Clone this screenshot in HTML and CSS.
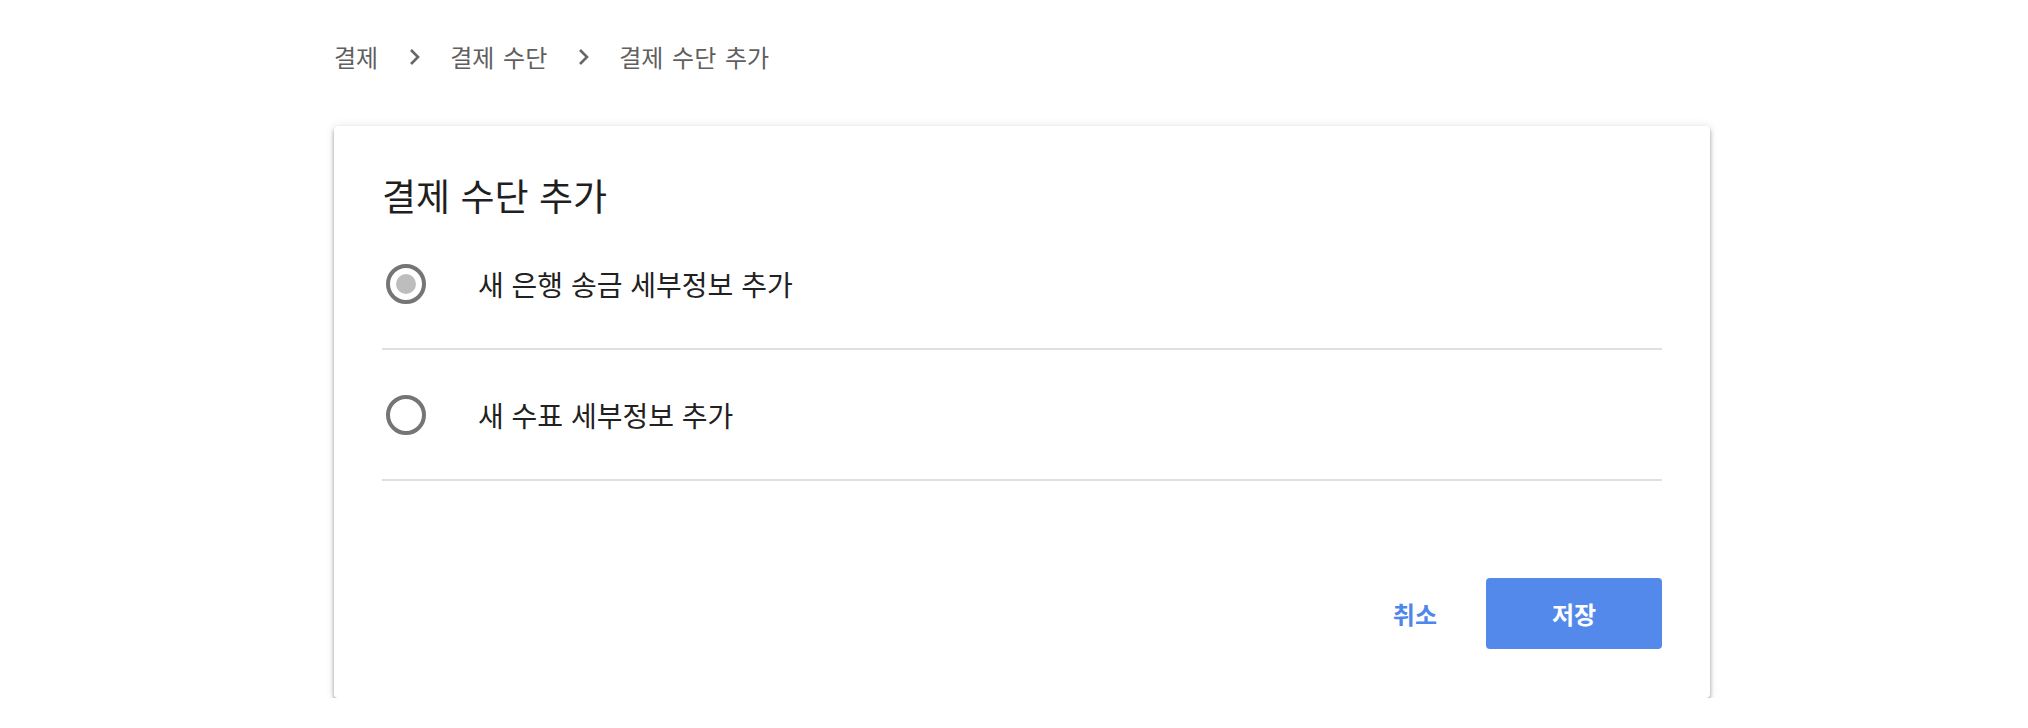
FILE: index.html
```html
<!DOCTYPE html>
<html lang="ko">
<head>
<meta charset="utf-8">
<title>결제 수단 추가</title>
<link rel="stylesheet" href="styles.css">
</head>
<body>
<div class="page">
  <nav class="crumbs">
    <span class="crumb">결제</span>
    <svg class="chev" width="12" height="18" viewBox="0 0 12 18"><polyline points="2,2 9,9 2,16" fill="none" stroke="#666666" stroke-width="2.6"/></svg>
    <span class="crumb">결제 수단</span>
    <svg class="chev" width="12" height="18" viewBox="0 0 12 18"><polyline points="2,2 9,9 2,16" fill="none" stroke="#666666" stroke-width="2.6"/></svg>
    <span class="crumb">결제 수단 추가</span>
  </nav>
  <section class="card">
    <h1 class="title">결제 수단 추가</h1>
    <div class="options">
      <label class="option">
        <span class="radio-box"><span class="radio checked"></span></span>
        <span class="option-text">새 은행 송금 세부정보 추가</span>
      </label>
      <label class="option">
        <span class="radio-box"><span class="radio"></span></span>
        <span class="option-text">새 수표 세부정보 추가</span>
      </label>
    </div>
    <div class="actions">
      <button class="btn btn-text">취소</button>
      <button class="btn btn-primary">저장</button>
    </div>
  </section>
</div>
</body>
</html>
```

FILE: styles.css
```css
* { box-sizing: border-box; }
html, body { margin: 0; padding: 0; background: #ffffff; }
body {
  font-family: "Noto Sans CJK KR", "Noto Sans", sans-serif;
  color: #212121;
}
.page {
  padding: 0 0 0 334px;
}
.crumbs {
  display: flex;
  align-items: center;
  height: 114px;
  margin-bottom: 12px;
}
.crumb {
  font-size: 24px;
  word-spacing: 2px;
  color: #5f5f5f;
  line-height: 1;
}
.chev {
  display: block;
  margin: 0 29px 0 31px;
}
.card {
  width: 1376px;
  height: 572px;
  background: #ffffff;
  border-radius: 4px;
  box-shadow: 0 3px 4px rgba(0,0,0,0.34), 0 0 10px rgba(0,0,0,0.10);
  padding: 46px 48px 49px 48px;
  display: flex;
  flex-direction: column;
}
.title {
  margin: 0;
  font-size: 37px;
  font-weight: 400;
  line-height: 47px;
  color: #1f1f1f;
}
.options {
  display: flex;
  flex-direction: column;
}
.option {
  display: flex;
  align-items: center;
  height: 131px;
  border-bottom: 2px solid #e0e0e0;
}
.radio-box {
  width: 48px;
  height: 48px;
  display: flex;
  align-items: center;
  justify-content: center;
  margin-right: 48px;
}
.radio {
  width: 40px;
  height: 40px;
  border: 4px solid #757575;
  border-radius: 50%;
  display: flex;
  align-items: center;
  justify-content: center;
}
.radio.checked::after {
  content: "";
  width: 20px;
  height: 20px;
  border-radius: 50%;
  background: #bdbdbd;
}
.option-text {
  font-size: 28px;
  color: #212121;
}
.actions {
  margin-top: auto;
  display: flex;
  justify-content: flex-end;
  align-items: center;
}
.btn {
  font-family: "Noto Sans CJK KR", "Noto Sans", sans-serif;
  font-size: 24px;
  font-weight: 700;
  border: none;
  cursor: pointer;
  height: 71px;
  border-radius: 4px;
}
.btn-text {
  background: transparent;
  color: #4f86ea;
  padding: 0 24px;
  margin-right: 25px;
}
.btn-primary {
  background: #5289eb;
  color: #ffffff;
  width: 176px;
}
```
